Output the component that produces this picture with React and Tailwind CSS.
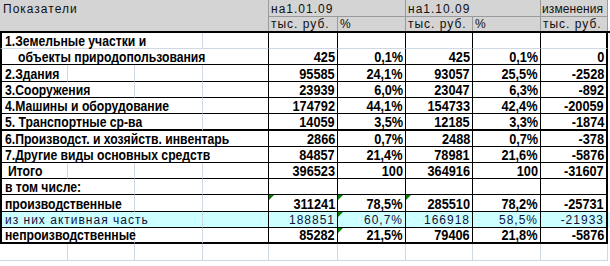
import React from 'react'

const COLS = ['w-[68px]', 'w-[67px]', 'w-[68px]', 'w-[66px]', 'w-[69px]', 'w-[68px]', 'w-[67px]', 'w-[68px]', 'w-[67px]']
const SPAN = ['', 'w-[68px]', 'w-[135px]', 'w-[203px]', 'w-[269px]']
const LIGHT = 'border-[#d0d7e5]'

const rows = [
  { label: '1.Земельные участки и', span: 3, vals: ['', '', '', '', ''], h: 'h-[16px]', light: true },
  { label: 'объекты природопользования', indent: 'pl-[16px]', span: 4, vals: ['425', '0,1%', '425', '0,1%', '0'], h: 'h-[16px]' },
  { label: '2.Здания', span: 1, vals: ['95585', '24,1%', '93057', '25,5%', '-2528'], h: 'h-[17px]' },
  { label: '3.Сооружения', span: 2, vals: ['23939', '6,0%', '23047', '6,3%', '-892'], h: 'h-[16px]' },
  { label: '4.Машины и оборудование', span: 3, vals: ['174792', '44,1%', '154733', '42,4%', '-20059'], h: 'h-[16px]' },
  { label: '5. Транспортные ср-ва', span: 3, vals: ['14059', '3,5%', '12185', '3,3%', '-1874'], h: 'h-[17px]', thick: true },
  { label: '6.Производст. и хозяйств. инвентарь', span: 4, vals: ['2866', '0,7%', '2488', '0,7%', '-378'], h: 'h-[16px]' },
  { label: '7.Другие виды основных средств', span: 4, vals: ['84857', '21,4%', '78981', '21,6%', '-5876'], h: 'h-[16px]' },
  { label: 'Итого', indent: 'pl-[6px]', span: 1, vals: ['396523', '100', '364916', '100', '-31607'], h: 'h-[16px]' },
  { label: 'в том числе:', span: 2, vals: ['', '', '', '', ''], h: 'h-[16px]' },
  { label: 'производственные', span: 2, vals: ['311241', '78,5%', '285510', '78,2%', '-25731'], h: 'h-[17px]', marks: [0, 1, 2] },
  { label: 'из них активная часть', span: 3, vals: ['188851', '60,7%', '166918', '58,5%', '-21933'], h: 'h-[16px]', plain: true, marks: [1] },
  { label: 'непроизводственные', span: 2, vals: ['85282', '21,5%', '79406', '21,8%', '-5876'], h: 'h-[16px]', marks: [1], last: true },
]

// Excel's zoomed bold looks tall and narrow, so the bold text is squeezed a little
const bold = "font-['Liberation_Sans',Arial,sans-serif] font-bold text-black"
const boldLabel = 'inline-block origin-left scale-x-[0.87] text-[14px] leading-none'
const boldNum = 'inline-block origin-right scale-x-[0.85] text-[15px] leading-none'
const plain = "font-['Liberation_Sans',Arial,sans-serif] text-[12px] tracking-[1px] text-[#10103a]"

function Mark() {
  return (
    <span className="absolute left-0 top-0 w-0 h-0 border-t-[5px] border-t-[#008000] border-r-[5px] border-r-transparent" />
  )
}

function BodyRow({ row }) {
  const bottom = row.last || row.thick ? 'border-b-2 border-b-black' : row.light ? `border-b ${LIGHT}` : 'border-b border-b-black'
  const font = row.plain ? plain : bold
  const rest = []
  for (let i = row.span; i < 4; i++) rest.push(i)
  return (
    <div className={`flex ${row.h} ${row.plain ? 'bg-[#ccffff]' : 'bg-white'}`}>
      <div
        className={`${SPAN[row.span]} border-l-2 border-l-black ${bottom} ${row.span === 4 ? 'border-r border-r-black' : `border-r ${LIGHT}`} flex items-end pl-[3px] whitespace-nowrap ${font} ${row.plain ? 'pb-[1px]' : ''} ${row.indent || ''}`}
      >
        <span className={`relative z-10 ${row.plain ? 'leading-none' : boldLabel}`}>{row.label}</span>
      </div>
      {rest.map((i) => (
        <div key={i} className={`${COLS[i]} ${bottom} border-r ${i === 3 ? 'border-r-black' : LIGHT}`} />
      ))}
      {row.vals.map((v, j) => (
        <div
          key={j}
          className={`${COLS[4 + j]} relative ${bottom} ${j === 4 ? 'border-r-2' : 'border-r'} border-r-black flex items-end justify-end pr-[2px] whitespace-nowrap ${row.plain ? 'pb-[1px]' : ''} ${font}`}
        >
          {row.marks && row.marks.includes(j) && <Mark />}
          <span className={row.plain ? 'leading-none' : boldNum}>{v}</span>
        </div>
      ))}
    </div>
  )
}

export default function App() {
  const hcell = "bg-[#d4d4d4] border-[#9a9a9a] font-['Liberation_Sans',Arial,sans-serif] text-[12px] text-[#101010] leading-none whitespace-nowrap"
  return (
    <div className="w-[610px] h-[266px] bg-white overflow-hidden">
      {/* header */}
      <div className="flex h-[33px] border-b-2 border-b-black">
        <div className={`${hcell} w-[269px] border-r pl-[3px] pt-[3px] tracking-[1px]`}>Показатели</div>
        <div className="w-[339px] flex flex-col">
          <div className="flex h-[17px]">
            <div className={`${hcell} w-[137px] border-r border-b pl-[2px] pt-[3px] tracking-[1px]`}>на1.01.09</div>
            <div className={`${hcell} w-[135px] border-r border-b pl-[2px] pt-[3px] tracking-[1px]`}>на1.10.09</div>
            <div className={`${hcell} w-[67px] border-r border-b pl-[1px] pt-[3px] tracking-[0.1px]`}>изменения</div>
          </div>
          <div className="flex flex-1">
            <div className={`${hcell} w-[69px] border-r pl-[2px] pt-[1px] tracking-[1px]`}>тыс. руб.</div>
            <div className={`${hcell} w-[68px] border-r pl-[2px] pt-[1px] tracking-[1px]`}>%</div>
            <div className={`${hcell} w-[67px] border-r pl-[2px] pt-[1px] tracking-[1px]`}>тыс. руб.</div>
            <div className={`${hcell} w-[68px] border-r pl-[2px] pt-[1px] tracking-[1px]`}>%</div>
            <div className={`${hcell} w-[67px] border-r pl-[2px] pt-[1px] tracking-[1px]`}>тыс. руб.</div>
          </div>
        </div>
      </div>

      {/* body */}
      {rows.map((r, i) => (
        <BodyRow key={i} row={r} />
      ))}

      {/* empty spreadsheet row */}
      <div className="flex h-[17px]">
        {COLS.map((c, i) => (
          <div key={i} className={`${c} border-r border-b ${LIGHT}`} />
        ))}
      </div>
    </div>
  )
}
